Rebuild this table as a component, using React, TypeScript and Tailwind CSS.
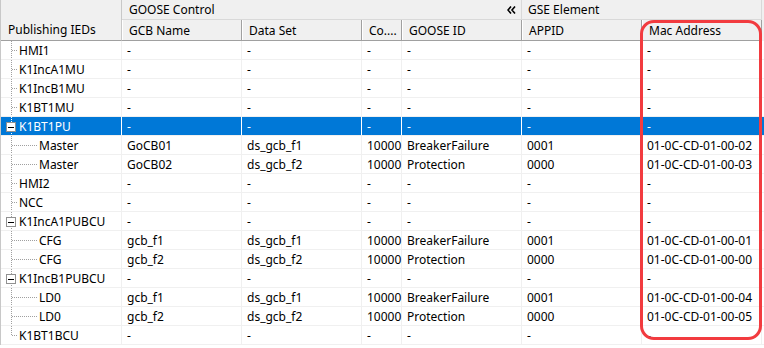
import React from "react";

type Row = {
  name: string;
  child?: boolean;
  expanded?: boolean;
  selected?: boolean;
  last?: boolean;
  gcb?: string;
  ds?: string;
  conf?: string;
  gooseId?: string;
  appid?: string;
  mac?: string;
};

const rows: Row[] = [
  { name: "HMI1" },
  { name: "K1IncA1MU" },
  { name: "K1IncB1MU" },
  { name: "K1BT1MU" },
  { name: "K1BT1PU", expanded: true, selected: true },
  { name: "Master", child: true, gcb: "GoCB01", ds: "ds_gcb_f1", conf: "10000", gooseId: "BreakerFailure", appid: "0001", mac: "01-0C-CD-01-00-02" },
  { name: "Master", child: true, gcb: "GoCB02", ds: "ds_gcb_f2", conf: "10000", gooseId: "Protection", appid: "0000", mac: "01-0C-CD-01-00-03" },
  { name: "HMI2" },
  { name: "NCC" },
  { name: "K1IncA1PUBCU", expanded: true },
  { name: "CFG", child: true, gcb: "gcb_f1", ds: "ds_gcb_f1", conf: "10000", gooseId: "BreakerFailure", appid: "0001", mac: "01-0C-CD-01-00-01" },
  { name: "CFG", child: true, gcb: "gcb_f2", ds: "ds_gcb_f2", conf: "10000", gooseId: "Protection", appid: "0000", mac: "01-0C-CD-01-00-00" },
  { name: "K1IncB1PUBCU", expanded: true },
  { name: "LD0", child: true, gcb: "gcb_f1", ds: "ds_gcb_f1", conf: "10000", gooseId: "BreakerFailure", appid: "0001", mac: "01-0C-CD-01-00-04" },
  { name: "LD0", child: true, gcb: "gcb_f2", ds: "ds_gcb_f2", conf: "10000", gooseId: "Protection", appid: "0000", mac: "01-0C-CD-01-00-05" },
  { name: "K1BT1BCU", last: true },
];

const widths = ["w-[121px]", "w-[120px]", "w-[120px]", "w-[40px]", "w-[120px]", "w-[120px]", "w-[120px]"];

// dotted tree connectors + expander box for the first column
function TreeLines({ row }: { row: Row }) {
  const dot = row.selected ? "#ffffff" : "#a0a0a0";
  const mid = 9.5;
  return (
    <svg width="40" height="18" className="absolute left-0 top-0" shapeRendering="crispEdges">
      {row.expanded ? (
        <>
          <line x1="10.5" y1="0" x2="10.5" y2="5" stroke={dot} strokeDasharray="1 1" />
          <line x1="10.5" y1="14" x2="10.5" y2="18" stroke={dot} strokeDasharray="1 1" />
          <rect x="5.5" y="5.5" width="9" height="9" fill="#ffffff" stroke="#919191" />
          <line x1="7" y1="10" x2="13" y2="10" stroke="#000" />
        </>
      ) : (
        <>
          <line x1="10.5" y1="0" x2="10.5" y2={row.last ? mid : 18} stroke={dot} strokeDasharray="1 1" />
          <line x1="11" y1={mid} x2={row.child ? 36 : 16} y2={mid} stroke={dot} strokeDasharray="1 1" />
        </>
      )}
    </svg>
  );
}

export default function App() {
  return (
    <div className="relative h-[348px] w-[764px] overflow-hidden bg-white text-[12px] text-black [font-family:'Noto_Sans',sans-serif]">
      {/* column headers */}
      <div className="flex h-[41px] border-l border-[#c8c8c8] bg-[#f0f0f0]">
        <div className="flex w-[121px] items-end border-r border-b border-r-[#c8c8c8] border-b-[#a0a0a0] px-[7px] pb-[1px]">
          Publishing IEDs
        </div>
        <div className="flex flex-col">
          <div className="flex h-[20px] border-b border-[#d9d9d9]">
            <div className="flex w-[400px] items-center justify-between border-r border-[#d9d9d9] pt-[1px] pl-[7px] pr-[5px]">
              <span>GOOSE Control</span>
              <svg width="9" height="8" viewBox="0 0 9 8">
                <path d="M4 0.5 L1 4 L4 7.5 M8 0.5 L5 4 L8 7.5" stroke="#000" strokeWidth="1.6" fill="none" />
              </svg>
            </div>
            <div className="flex w-[240px] items-center border-r border-[#d9d9d9] pt-[1px] pl-[6px]">GSE Element</div>
          </div>
          <div className="flex h-[21px] border-b border-[#a0a0a0]">
            {["GCB Name", "Data Set", "Co....", "GOOSE ID", "APPID", "Mac Address"].map((h, i) => (
              <div
                key={h}
                className={`${widths[i + 1]} flex items-center border-r border-[#a0a0a0] pt-[2px] pl-[7px] shadow-[inset_1px_0_0_#ffffff] whitespace-nowrap`}
              >
                {h}
              </div>
            ))}
          </div>
        </div>
      </div>

      {/* tree rows */}
      <div className="border-l border-[#c8c8c8]">
        {rows.map((r, idx) => {
          const cells = [r.gcb, r.ds, r.conf, r.gooseId, r.appid, r.mac].map((v) => v ?? "-");
          const sel = r.selected;
          return (
            <div
              key={idx}
              className={`flex h-[19px] border-b border-[#f0f0f0] ${sel ? "bg-[#0078d7] text-white" : ""}`}
            >
              <div className={`relative w-[121px] border-r ${sel ? "border-white" : "border-[#f0f0f0]"}`}>
                <TreeLines row={r} />
                <span className={`absolute top-0 leading-[19px] ${r.child ? "left-[38px]" : "left-[18px]"}`}>{r.name}</span>
              </div>
              {cells.map((c, i) => (
                <div
                  key={i}
                  className={`${widths[i + 1]} border-r pl-[5px] leading-[19px] whitespace-nowrap ${sel ? "border-white" : "border-[#f0f0f0]"}`}
                >
                  {c}
                </div>
              ))}
            </div>
          );
        })}
      </div>

      {/* highlight around the MAC column */}
      <div className="pointer-events-none absolute left-[640px] top-[20px] h-[320px] w-[122px] rounded-[14px] border-[3px] border-[#f23b3f]" />
    </div>
  );
}
